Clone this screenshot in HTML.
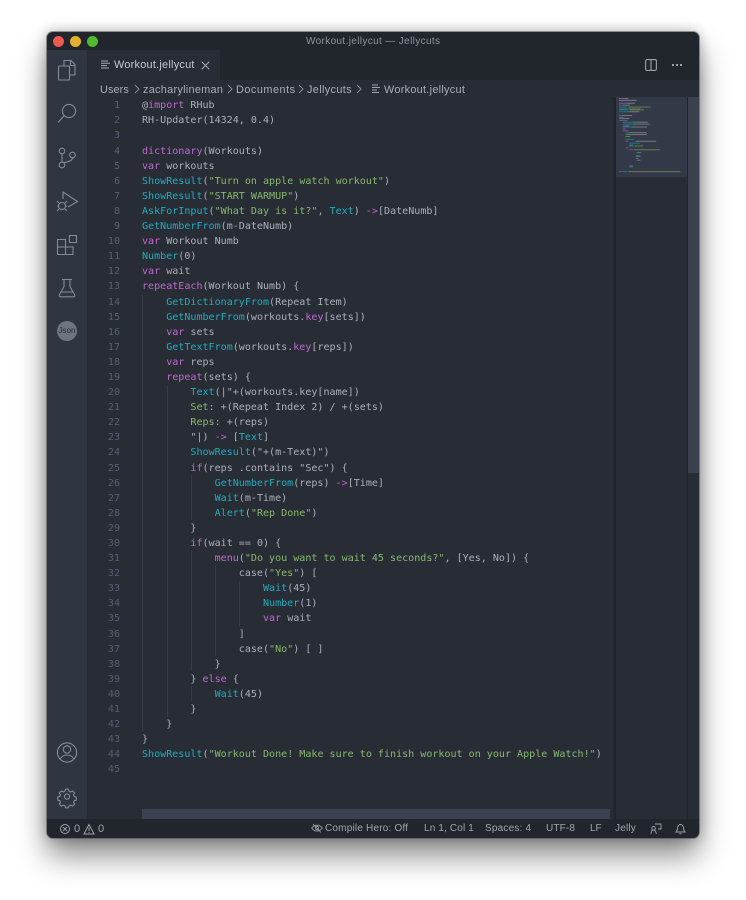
<!DOCTYPE html>
<html><head><meta charset="utf-8"><style>
html,body{margin:0;padding:0;background:#fff;width:746px;height:900px;overflow:hidden}
#wrap{position:absolute;left:0;top:0;width:746px;height:900px;filter:blur(.35px)}
#win{position:absolute;left:47px;top:32px;width:652px;height:806px;border-radius:6px;box-shadow:0 0 0 1px rgba(80,80,80,.55),0 18px 30px rgba(0,0,0,.45),0 0 14px rgba(0,0,0,.3)}
.a{position:absolute}
#clip{position:absolute;left:47px;top:32px;width:652px;height:806px;border-radius:6px;overflow:hidden;background:#282c35}
.ui{position:absolute;font:10.9px/14px "Liberation Sans",sans-serif;color:#a8aeb9;white-space:nowrap}
.st{position:absolute;font:10px/14px "Liberation Sans",sans-serif;color:#a0a6b1;white-space:nowrap;top:822px}
pre{margin:0;position:absolute;font:10.05px/15.09px "DejaVu Sans Mono",monospace;color:#aab0bc;white-space:pre}
.k{color:#bd6acf}.f{color:#22acbd}.s{color:#86ba6d}
.g{position:absolute;width:1px;background:#363b45}
svg{position:absolute;overflow:visible}
.ic{fill:none;stroke:#858b97;stroke-width:1.1}
</style></head><body>
<div id="wrap">
<div id="win"></div>
<div id="clip"></div>
<div class="a" style="left:47px;top:32px;width:652px;height:18px;background:#21252c;border-radius:6px 6px 0 0"></div>
<div class="a" style="left:52.500px;top:35.500px;width:11px;height:11px;border-radius:50%;background:#ed5a50"></div>
<div class="a" style="left:69.500px;top:35.500px;width:11px;height:11px;border-radius:50%;background:#e3b22c"></div>
<div class="a" style="left:86.500px;top:35.500px;width:11px;height:11px;border-radius:50%;background:#4fb92f"></div>
<div class="ui" style="left:306px;top:35px;font-size:10px;color:#8f949e;letter-spacing:.36px">Workout.jellycut — Jellycuts</div>

<div class="a" style="left:47px;top:50px;width:40px;height:769px;background:#2f3541"></div>
<div class="a" style="left:87px;top:50px;width:612px;height:30px;background:#21252c"></div>
<div class="a" style="left:87px;top:50px;width:133px;height:30px;background:#282c35"></div>

<!-- activity icons -->
<svg class="ic" style="left:0;top:0" width="746" height="900" viewBox="0 0 746 900">
<path d="M64 66v-5.500h7l4 4V75h-5.500"/><path d="M70.500 61v4.500H75"/><rect x="58.500" y="66" width="11" height="14" rx="1"/>
<circle cx="69" cy="111" r="6.600"/><path d="M64.200 115.600L58 122.500"/>
<circle cx="62" cy="151" r="2.800"/><circle cx="62" cy="165" r="2.800"/><circle cx="72.500" cy="155" r="2.800"/><path d="M62 153.800v8.400M72.500 157.800c0 3-4 4-7 4.500l-2 1"/>
<path d="M63 199V192l14.500 9.500L68 207"/><circle cx="62" cy="206" r="3.500"/><path d="M57 201l2 2M57 206h2M57 211l2-2M67 201l-2 2M67 206h-2M67 211l-2-2"/>
<path d="M57.500 239.500h8v15h-8zM57.500 247h15.500v7.500H65.500M69.500 235.500h7v7h-7z"/>
<path d="M64 279.500v7l-4.700 8.500c-.500 1 0 1.800 1 1.800h13.400c1 0 1.500-.800 1-1.800L70 286.500v-7M62 279.500h10M61.500 292h11"/>
<circle cx="67" cy="752.500" r="9.600"/><circle cx="67" cy="749.500" r="3.700"/><path d="M60 759.500c1.500-3.500 4-4.500 7-4.500s5.500 1 7 4.500"/>
<g transform="translate(67 795.800) scale(.76) translate(-67 -795.200)" style="stroke-width:1.450"><path d="M65 786.500h4l.6 2.700 2.200 1 2.500-1.400 2.800 2.800-1.500 2.400.9 2.200 2.700.7v4l-2.700.6-.9 2.200 1.500 2.400-2.800 2.800-2.500-1.500-2.200.9-.6 2.700h-4l-.6-2.700-2.200-.9-2.500 1.500-2.800-2.800 1.500-2.400-.9-2.200-2.700-.6v-4l2.700-.7.900-2.200-1.500-2.400 2.800-2.800 2.500 1.400 2.200-1z"/><circle cx="67" cy="796.200" r="3.400"/></g>
</svg>
<div class="a" style="left:57px;top:321px;width:20px;height:20px;border-radius:50%;background:#6f7580;color:#2b2f38;font:8px/20px 'Liberation Sans',sans-serif;text-align:center">Json</div>

<!-- tab -->
<svg style="left:101px;top:60px" width="10" height="10"><path d="M0 1h7M0 3.300h9M0 5.600h6M0 8h8" stroke="#a2a8b3" stroke-width="1"/></svg>
<div class="ui" style="left:114px;top:58px;color:#c6cad1;letter-spacing:.25px">Workout.jellycut</div>
<svg style="left:201px;top:61px" width="9" height="9"><path d="M.7.700l7.600 7.600M8.300.700L.7 8.300" stroke="#b0b5be" stroke-width="1"/></svg>
<svg style="left:645px;top:59px" width="12" height="12"><rect x=".6" y=".6" width="10.800" height="10.800" rx="1.500" fill="none" stroke="#9ca2ac" stroke-width="1.100"/><path d="M6 .6v10.800" stroke="#9ca2ac" stroke-width="1.100"/></svg>
<div class="a" style="left:672px;top:64px;width:2px;height:2px;background:#9ca2ac;box-shadow:4px 0 #9ca2ac,8px 0 #9ca2ac"></div>

<!-- breadcrumbs -->
<div class="ui" style="left:100px;top:82.500px;letter-spacing:.1px">Users</div>
<div class="ui" style="left:143px;top:82.500px;letter-spacing:.28px">zacharylineman</div>
<div class="ui" style="left:236px;top:82.500px;letter-spacing:.5px">Documents</div>
<div class="ui" style="left:307px;top:82.500px;letter-spacing:.35px">Jellycuts</div>
<div class="ui" style="left:384px;top:82.500px;letter-spacing:.28px">Workout.jellycut</div>
<svg style="left:0;top:0" width="746" height="100"><path d="M135 85l4 4-4 4M228 85l4 4-4 4M299 85l4 4-4 4M357 85l4 4-4 4" fill="none" stroke="#8b919c" stroke-width=".9"/><path d="M372 85h6M372 87.500h8M372 90h5M372 92.500h7" stroke="#a2a8b3" stroke-width="1"/></svg>

<!-- line numbers -->
<pre style="left:100px;top:98.300px;width:20px;text-align:right;color:#566074">1
2
3
4
5
6
7
8
9
10
11
12
13
14
15
16
17
18
19
20
21
22
23
24
25
26
27
28
29
30
31
32
33
34
35
36
37
38
39
40
41
42
43
44
45</pre>

<!-- indent guides -->
<div class="g" style="left:142px;top:294px;height:437px"></div>
<div class="g" style="left:167px;top:385px;height:332px"></div>
<div class="g" style="left:191px;top:475px;height:45px"></div>
<div class="g" style="left:191px;top:550px;height:121px"></div>
<div class="g" style="left:191px;top:686px;height:15px"></div>
<div class="g" style="left:215px;top:565px;height:91px"></div>
<div class="g" style="left:239px;top:581px;height:45px"></div>

<pre style="left:142px;top:98.300px">@<span class="k">import</span> RHub
RH-Updater(14324, 0.4)

<span class="k">dictionary</span>(Workouts)
<span class="k">var</span> workouts
<span class="f">ShowResult</span>(<span class="s">"Turn on apple watch workout"</span>)
<span class="f">ShowResult</span>(<span class="s">"START WARMUP"</span>)
<span class="f">AskForInput</span>(<span class="s">"What Day is it?"</span>, <span class="f">Text</span>) <span class="k">-&gt;</span>[DateNumb]
<span class="f">GetNumberFrom</span>(m-DateNumb)
<span class="k">var</span> Workout Numb
<span class="f">Number</span>(0)
<span class="k">var</span> wait
<span class="k">repeatEach</span>(Workout Numb) {
    <span class="f">GetDictionaryFrom</span>(Repeat Item)
    <span class="f">GetNumberFrom</span>(workouts.<span class="k">key</span>[sets])
    <span class="k">var</span> sets
    <span class="f">GetTextFrom</span>(workouts.<span class="k">key</span>[reps])
    <span class="k">var</span> reps
    <span class="k">repeat</span>(sets) {
        <span class="f">Text</span>(|"+(workouts.key[name])
        <span class="s">Set:</span> +(Repeat Index 2) / +(sets)
        <span class="s">Reps:</span> +(reps)
        "|) <span class="k">-&gt;</span> [<span class="f">Text</span>]
        <span class="f">ShowResult</span>("+(m-Text)")
        <span class="k">if</span>(reps .contains "Sec") {
            <span class="f">GetNumberFrom</span>(reps) <span class="k">-&gt;</span>[Time]
            <span class="f">Wait</span>(m-Time)
            <span class="f">Alert</span>(<span class="s">"Rep Done"</span>)
        }
        <span class="k">if</span>(wait == 0) {
            <span class="k">menu</span>(<span class="s">"Do you want to wait 45 seconds?"</span>, [Yes, No]) {
                case(<span class="s">"Yes"</span>) [
                    <span class="f">Wait</span>(45)
                    <span class="f">Number</span>(1)
                    <span class="k">var</span> wait
                ]
                case(<span class="s">"No"</span>) [ ]
            }
        } <span class="k">else</span> {
            <span class="f">Wait</span>(45)
        }
    }
}
<span class="f">ShowResult</span>(<span class="s">"Workout Done! Make sure to finish workout on your Apple Watch!"</span>)
</pre>

<!-- scrollbars / minimap -->
<div class="a" style="left:142px;top:809px;width:468px;height:10px;background:#3a4150"></div>
<div class="a" style="left:612px;top:97px;width:4px;height:722px;background:linear-gradient(90deg,#282c35,#1f2229)"></div>
<div class="a" style="left:616px;top:97px;width:71px;height:80px;background:#333946"></div>
<div class="a" style="left:687px;top:97px;width:1px;height:722px;background:#21252c"></div>
<div class="a" style="left:688px;top:97px;width:11px;height:376px;background:#3a404d"></div>
<svg style="left:619px;top:98px;filter:blur(.3px)" width="66" height="76" opacity=".6">
<g transform="scale(.93 .95)">
<g fill="#a4aab6">
<rect x="0" y="0" width="10" height="1"/><rect x="0" y="2" width="19" height="1"/><rect x="8" y="5" width="9" height="1"/><rect x="4" y="7" width="8" height="1"/>
<rect x="11" y="14" width="11" height="1"/><rect x="3" y="18" width="11" height="1"/><rect x="3" y="21" width="8" height="1"/>
<rect x="15" y="25" width="16" height="1"/><rect x="15" y="27" width="18" height="1"/><rect x="7" y="29" width="4" height="1"/><rect x="14" y="30" width="16" height="1"/>
<rect x="10" y="36" width="20" height="1"/><rect x="10" y="38" width="20" height="1"/><rect x="18" y="45" width="22" height="1"/>
</g>
<g fill="#b766c8">
<rect x="1" y="0" width="5" height="1"/><rect x="0" y="5" width="9" height="1"/><rect x="0" y="7" width="3" height="1"/><rect x="0" y="18" width="3" height="1"/><rect x="0" y="21" width="3" height="1"/><rect x="0" y="23" width="9" height="1"/><rect x="4" y="29" width="3" height="1"/><rect x="4" y="32" width="3" height="1"/><rect x="4" y="34" width="6" height="1"/><rect x="7" y="45" width="3" height="1"/><rect x="7" y="52" width="3" height="1"/><rect x="11" y="54" width="4" height="1"/><rect x="18" y="63" width="3" height="1"/><rect x="11" y="71" width="4" height="1"/>
</g>
<g fill="#1fa5b5">
<rect x="0" y="9" width="9" height="1"/><rect x="0" y="11" width="9" height="1"/><rect x="0" y="12" width="10" height="1"/><rect x="0" y="14" width="11" height="1"/><rect x="0" y="20" width="5" height="1"/><rect x="4" y="25" width="15" height="1"/><rect x="4" y="27" width="11" height="1"/><rect x="4" y="30" width="10" height="1"/><rect x="7" y="36" width="4" height="1"/><rect x="7" y="43" width="9" height="1"/><rect x="11" y="47" width="11" height="1"/><rect x="11" y="49" width="4" height="1"/><rect x="11" y="50" width="5" height="1"/><rect x="18" y="60" width="4" height="1"/><rect x="18" y="61" width="6" height="1"/><rect x="11" y="72" width="4" height="1"/><rect x="0" y="77" width="9" height="1"/>
</g>
<g fill="#80b268">
<rect x="10" y="9" width="24" height="1"/><rect x="10" y="11" width="13" height="1"/><rect x="12" y="12" width="15" height="1"/><rect x="7" y="38" width="10" height="1"/><rect x="7" y="40" width="5" height="1"/><rect x="17" y="50" width="9" height="1"/><rect x="16" y="54" width="28" height="1"/><rect x="19" y="57" width="5" height="1"/><rect x="19" y="65" width="4" height="1"/><rect x="10" y="77" width="56" height="1"/>
</g>
</g>
</svg>

<!-- status bar -->
<div class="a" style="left:47px;top:819px;width:652px;height:19px;background:#21252c;border-radius:0 0 6px 6px"></div>
<svg style="left:60px;top:823px" width="50" height="12"><circle cx="5" cy="6" r="4.500" fill="none" stroke="#9ba1ac"/><path d="M3 4l4 4M7 4l-4 4" stroke="#9ba1ac" stroke-width=".9"/><path d="M29 1.500l5 9.500H24zM29 4.500v3.500M29 9v1" fill="none" stroke="#9ba1ac"/></svg>
<div class="st" style="left:74px;font-size:11px">0</div>
<div class="st" style="left:98px;font-size:11px">0</div>
<svg style="left:311px;top:823px" width="12" height="11"><path d="M.7 5c2.500-3.500 7.500-4 10.600 0-3 4-8 4-10.600 0zM2 1l8 8.500" fill="none" stroke="#9ba1ac" stroke-width=".9"/><circle cx="6" cy="5" r="1.700" fill="none" stroke="#9ba1ac" stroke-width=".8"/></svg>
<div class="st" style="left:325px;letter-spacing:.2px">Compile Hero: Off</div>
<div class="st" style="left:424px;letter-spacing:.15px">Ln 1, Col 1</div>
<div class="st" style="left:485px;letter-spacing:.2px">Spaces: 4</div>
<div class="st" style="left:546px;letter-spacing:.15px">UTF-8</div>
<div class="st" style="left:590px">LF</div>
<div class="st" style="left:615px;letter-spacing:.2px">Jelly</div>
<svg style="left:650px;top:823px" width="12" height="12"><path d="M5 1h6v5H8M3.500 3.500a1.800 1.800 0 1 0 .1 0zM1 11c.2-2.800 1.200-4 2.500-4S6 8.200 6.300 11" fill="none" stroke="#9ba1ac" stroke-width=".9"/></svg>
<svg style="left:675px;top:823px" width="11" height="12"><path d="M1 9c1-1 1.500-2 1.500-4 0-2 1.300-3.500 3-3.500s3 1.500 3 3.500c0 2 .5 3 1.500 4zM4.500 10.500c.5.600 1.500.600 2 0" fill="none" stroke="#9ba1ac" stroke-width=".9"/></svg>
</div>
</body></html>
